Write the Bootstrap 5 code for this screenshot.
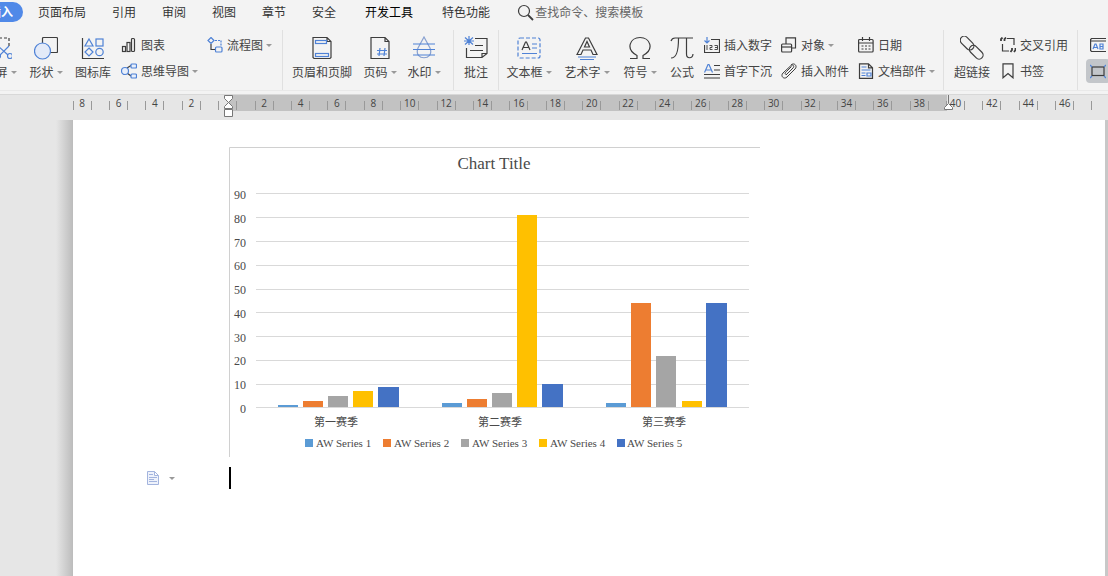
<!DOCTYPE html>
<html lang="zh-CN">
<head>
<meta charset="utf-8">
<meta name="viewport" content="width=device-width, initial-scale=1">
<title>文档编辑器</title>
<link rel="stylesheet" href="https://cdn.jsdelivr.net/npm/bootstrap@5.3.0/dist/css/bootstrap.min.css">
<style>
  body { font: 12px/16px "Noto Sans CJK SC", sans-serif; color: #444; background: #e6e6e6; overflow: hidden; }
  .ribbon { background: #f3f3f3; border-bottom: 1px solid #d8d8d8; }
  .tabs { height: 24px; gap: 26px; white-space: nowrap; }
  .tabs a { color: #333; text-decoration: none; }
  .tabs .tab-current { margin-left: -25px; padding: 2px 10px 2px 14px; width: 48px; margin-right: -11px; border-radius: 10px; background: #5089e8; color: #fff; font-weight: 700; }
  .tab-gap { margin-left: 3px; }
  .finder { width: 160px; gap: 1px; margin-left: 1px; }
  .finder input { border: 0; padding: 0; background: none; outline: 0; min-width: 0; height: 18px; line-height: 18px; }
  .finder input::placeholder { color: #666; opacity: 1; }
  .tools { height: 66px; }
  .tools > div { flex: none; margin-top: 6px; padding-top: 4px; }
  .tools svg, .finder svg { flex: none; fill: none; stroke: #3d3d3d; stroke-width: 1.2; }
  .tools svg .blu { stroke: #4f82d6; }
  .group + .group { border-left: 1px solid #e0e0e0; }
  .group-foot { height: 4px; border-top: 1px solid #e9e9e9; }
  .tools .btn { font-size: 12px; line-height: 16px; color: #444; padding: 0; border: 0; border-radius: 0; white-space: nowrap; }
  .big { height: 48px; display: flex; flex-direction: column; align-items: center; gap: 4px; }
  .big svg { width: 24px; height: 24px; margin-top: 2px; }
  .stack { display: flex; flex-direction: column; align-items: flex-start; gap: 10px; padding: 3px 0 0 5px; }
  .stack .btn { display: flex; align-items: center; gap: 4px; }
  .stack svg { width: 16px; height: 16px; }
  .dd::after { content: ""; display: inline-block; vertical-align: 3px; margin-left: 3px; border: 3px solid transparent; border-top-color: #999; border-bottom: 0; }
  .w34 { width: 34px; } .w38 { width: 38px; } .w44 { width: 44px; } .w46 { width: 46px; }
  .w48 { width: 48px; } .w50 { width: 50px; } .w56 { width: 56px; } .w60 { width: 60px; }
  .w77 { width: 77px; } .w78 { width: 78px; } .w80 { width: 80px; } .w86 { width: 86px; } .w90 { width: 90px; }
  .scrolled { margin-left: -22px; }
  .tools .picked { background: #c3c6ca; border-radius: 4px; padding: 4px; margin: -4px; }
  .ruler { height: 25px; padding-left: 64px; font: 10px/16px "Open Sans", sans-serif; color: #444; background: #e6e6e6; }
  .ruler > div { background: #e6e6e6; height: 16px; flex: 1 1 0; min-width: 0; display: flex; justify-content: center; align-items: flex-start; position: relative; }
  .ruler > div::before, .ruler > div::after { content: ""; width: 1px; height: 9px; margin-top: 6px; background: #999; flex: none; }
  .ruler span { width: 17px; text-align: center; }
  .ruler .in { background: #c2c2c2; }
  .ruler .from { background: linear-gradient(90deg, #e6e6e6 50%, #c2c2c2 50%); }
  .ruler .to { background: linear-gradient(90deg, #c2c2c2 28%, #e6e6e6 28%); }
  .ruler .tail { flex: 0 0 25px; justify-content: flex-start; padding-left: 8px; }
  .ruler .tail::after { display: none; }
  .ruler svg { position: absolute; top: 0; left: 50%; margin-left: -4px; fill: #fff; stroke: #777; }
  .ruler .to svg { left: 28%; }
  .desk { padding: 0 3px 0 56px; background: linear-gradient(90deg, #e6e6e6 56px, #bcbcbc 73px, #c8c8c8 73px); }
  .sheet { margin-left: 17px; background: #fff; min-height: calc(100vh - 120px); padding: 27px 0 0 73px; }
  .chart { display: block; margin-left: 83px; font-family: "Liberation Serif", "Noto Sans CJK SC", serif; fill: #4a4a4a; }
  .after-chart { margin-top: 10px; }
  .paste { width: 83px; gap: 6px; }
  .paste svg { fill: #eef2fb; stroke: #a3b4de; }
  .ins { width: 2px; height: 22px; background: #000; }
</style>
</head>
<body>
<header class="ribbon">
  <nav class="tabs d-flex align-items-center" aria-label="功能区">
    <a href="#" class="tab-current">插入</a>
    <a href="#">页面布局</a><a href="#">引用</a><a href="#">审阅</a><a href="#">视图</a><a href="#">章节</a><a href="#">安全</a>
    <a href="#" class="tab-gap text-black">开发工具</a><a href="#" class="tab-gap">特色功能</a>
    <div class="finder d-flex align-items-center">
      <svg width="17" height="17" viewBox="0 0 17 17"><circle cx="7" cy="7" r="5.5"/><path d="M11 11l5 5" stroke-width="1.8"/></svg>
      <input type="text" aria-label="查找命令" placeholder="查找命令、搜索模板">
    </div>
  </nav>
  <div class="tools d-flex">
    <div class="group d-flex">
      <button class="btn big w44 scrolled"><svg viewBox="0 0 24 24"><path d="M1 12V2h20v8" stroke-dasharray="3 2"/><g class="blu"><path d="M10 10l10 9M21 10l-9 9"/><circle cx="10" cy="20" r="2.5"/><circle cx="22" cy="20" r="2.5"/></g></svg><span class="dd">截屏</span></button>
      <button class="btn big w48"><svg viewBox="0 0 24 24"><rect x="8.5" y="1.5" width="15" height="15" rx="1"/><circle class="blu" cx="8.5" cy="15" r="8" fill="#e3eaf8"/></svg><span class="dd">形状</span></button>
      <button class="btn big w46"><svg viewBox="0 0 24 24"><path d="M1.5 2v20.5H23"/><g class="blu"><path d="M8 3l4 7H4zM8 12l4 4-4 4-4-4z"/><rect x="15" y="3" width="7" height="7"/><circle cx="18.5" cy="16" r="3.7"/></g></svg><span>图标库</span></button>
      <div class="stack w86">
        <button class="btn"><svg viewBox="0 0 16 16"><rect x="1.500" y="9.500" width="3" height="5"/><rect x="6" y="5.500" width="3" height="9"/><rect x="10.500" y="1.500" width="3" height="13" rx="1"/></svg><span>图表</span></button>
        <button class="btn"><svg viewBox="0 0 16 16"><path d="M6 5l4-2.500M6 10l4 3"/><g class="blu" fill="#e8effb"><circle cx="4" cy="8" r="3.500"/><rect x="10" y="1" width="5.500" height="4" rx="1"/><rect x="10" y="11" width="5.500" height="4" rx="1"/></g></svg><span class="dd">思维导图</span></button>
      </div>
      <div class="stack w80">
        <button class="btn"><svg viewBox="0 0 16 16"><path class="blu" d="M4 .5l3 3-3 3-3-3z"/><path class="blu" d="M8 3.500h6v6" stroke-dasharray="2 1"/><path d="M4 7v5.500h4"/><rect class="blu" x="8.500" y="10" width="6.500" height="5" rx="1"/></svg><span class="dd">流程图</span></button>
      </div>
    </div>
    <div class="group d-flex pe-1">
      <button class="btn big w78"><svg viewBox="0 0 24 24"><path d="M3 1.500h14l4 4v16l-1 1H4l-1-1zM17 1.500v4h4"/><g class="blu"><rect x="5.500" y="4.500" width="11" height="3"/><rect x="5.500" y="17.500" width="13" height="3"/></g></svg><span>页眉和页脚</span></button>
      <button class="btn big w38"><svg viewBox="0 0 24 24"><path d="M3 1.500h14l4 4v17H3zM17 1.500v4h4"/><path class="blu" d="M12 12l-1 8M17 12l-1 8M9 14.500h10M9 18h10"/></svg><span class="dd">页码</span></button>
      <button class="btn big w50"><svg viewBox="0 0 24 24"><path d="M12 1L6 12c-5 13 17 13 12 0z" stroke="#87a0d0"/><path class="blu" d="M1 8h22M1 13.500h22M1 19h22"/></svg><span class="dd">水印</span></button>
    </div>
    <div class="group d-flex">
      <button class="btn big w44"><svg viewBox="0 0 24 24"><path d="M11 2.500h12v15l-5 4H2.500V12M23 17.500h-5v4M11 9.500h8M6 14.500h13"/><path class="blu" d="M5 0v9M1 1.500l8 7M9 1.500l-8 7M0 5h10"/></svg><span>批注</span></button>
    </div>
    <div class="group d-flex">
      <button class="btn big w60"><svg viewBox="0 0 24 24"><rect class="blu" x="1" y="2" width="22" height="20" rx="2" stroke-dasharray="4 2"/><path d="M5 14L8.500 6h1L13 14M6 11.500h6"/><path class="blu" d="M15 8h5M15 12h5M5 17.500h15"/></svg><span class="dd">文本框</span></button>
      <button class="btn big w56"><svg viewBox="0 0 24 24"><path d="M2 18.500L10.500 2h3L22 18.500h-4L16 14H8l-2 4.500zM9.500 11h5L12 5.500z"/><path class="blu" d="M3 21h18M5 23.500h14"/></svg><span class="dd">艺术字</span></button>
      <button class="btn big w50"><svg viewBox="0 0 24 24"><path d="M2 22.500h7v-3C-3 13 2 1.500 12 1.500S27 13 15 19.500v3h7"/></svg><span class="dd">符号</span></button>
      <button class="btn big w34"><svg viewBox="0 0 24 24"><path d="M1 5q1-3 4-3h18M8.500 2.500C8.500 14 7 22 1 22M16.500 2.500V18c0 5 6 5 6.500 0"/></svg><span>公式</span></button>
      <div class="stack w77">
        <button class="btn"><svg viewBox="0 0 16 16"><path d="M7 2.500h8.500v13H.5V8"/><path class="blu" d="M3 0v6M.5 3.500L3 6l2.500-2.500"/><path d="M3 8v5M5.500 8.500H8v2H6v2h2.500M10.500 8.500h3v4h-3M11 10.500h2.500" stroke-width=".9"/></svg><span>插入数字</span></button>
        <button class="btn"><svg viewBox="0 0 16 16"><path class="blu" d="M.5 9.500L4 1.500h1l3.500 8M2 7h5.500"/><path d="M10 2.500h6M10 7h6M0 11.500h16M0 15h16"/></svg><span>首字下沉</span></button>
      </div>
      <div class="stack w77">
        <button class="btn"><svg viewBox="0 0 16 16"><path d="M5 7V.8h9.500V11H11"/><rect x=".6" y="7" width="10" height="8" rx="1"/><path d="M.6 10h10"/></svg><span class="dd">对象</span></button>
        <button class="btn"><svg viewBox="0 0 16 16"><path d="M5 12l7-7c2-2-.5-4-2-2.500L2 10c-3 3 1 7 4 4l8-8c3-3-1-7-4-4M4.500 11.500c-1-1 0-2 1-3l5-5" stroke-width="1"/></svg><span>插入附件</span></button>
      </div>
      <div class="stack w90">
        <button class="btn"><svg viewBox="0 0 16 16"><rect x=".6" y="2.500" width="14.500" height="12.500" rx="1"/><path d="M4.500 0v4M11.500 0v4M1 6h14M3.500 9h2M7 9h2M10.500 9h2M3.500 12h2M7 12h2M10.500 12h2"/></svg><span>日期</span></button>
        <button class="btn"><svg viewBox="0 0 16 16"><path d="M1.500.8h9l4 4v10.500h-13zM10.500.8v4h4"/><path class="blu" d="M3.500 4h5M3.500 7h9M3.500 10h4M3.500 12.500h4M9 10h4v3H9z"/></svg><span class="dd">文档部件</span></button>
      </div>
    </div>
    <div class="group d-flex">
      <button class="btn big w56"><svg viewBox="0 0 24 24"><g transform="rotate(45 12 12)"><rect x="-3" y="8" width="16" height="8" rx="4"/><rect x="10" y="8" width="16" height="8" rx="4"/></g></svg><span>超链接</span></button>
      <div class="stack w77 ps-0">
        <button class="btn"><svg viewBox="0 0 16 16"><path d="M7 1.500h7V8M2.500 7v7H9"/><path d="M2.500.5L1 2v2M6 .5L4.500 2v2M12 11v2l-1.500 2M15.500 11v2L14 15" stroke-width="1.800"/></svg><span>交叉引用</span></button>
        <button class="btn"><svg viewBox="0 0 16 16"><path d="M3 .8h10v14L8 10.500l-5 4.300z"/></svg><span>书签</span></button>
      </div>
    </div>
    <div class="group d-flex">
      <div class="stack ps-2 ms-1">
        <button class="btn" aria-label="文字域"><svg viewBox="0 0 16 16"><path d="M16 1.500H1.500L.6 2.500v11l.9 1H16M1 4h15"/><path class="blu" d="M3 12l2-5h1l2 5M4 10.500h3M10 7v5h3v-5zM10 9.500h3"/></svg></button>
        <button class="btn picked" aria-label="域底纹"><svg viewBox="0 0 16 16"><rect x="2" y="4" width="12" height="8.500"/><path class="blu" d="M0 2l2 2M0 15l2-2M16 2l-2 2M16 15l-2-2"/></svg></button>
      </div>
    </div>
  </div>
  <div class="group-foot"></div>
</header>

<div class="ruler d-flex">
  <div><span>8</span></div><div><span>6</span></div><div><span>4</span></div><div><span>2</span></div>
  <div class="from"><span></span><svg width="10" height="23" viewBox="0 0 10 23"><path d="M.5.5h8v3l-4 4-4-4zM4.500 7.500l4 4v2h-8v-2zM.5 14.500h8v7h-8z"/></svg></div>
  <div class="in"><span>2</span></div><div class="in"><span>4</span></div><div class="in"><span>6</span></div><div class="in"><span>8</span></div><div class="in"><span>10</span></div><div class="in"><span>12</span></div><div class="in"><span>14</span></div><div class="in"><span>16</span></div><div class="in"><span>18</span></div><div class="in"><span>20</span></div><div class="in"><span>22</span></div><div class="in"><span>24</span></div><div class="in"><span>26</span></div><div class="in"><span>28</span></div><div class="in"><span>30</span></div><div class="in"><span>32</span></div><div class="in"><span>34</span></div><div class="in"><span>36</span></div><div class="in"><span>38</span></div>
  <div class="to"><span>40</span><svg width="10" height="16" viewBox="0 0 10 16"><path d="M4.500 0v8M4.500 8.500l4 4v2h-8v-2z"/></svg></div>
  <div><span>42</span></div><div><span>44</span></div><div><span>46</span></div><div class="tail"></div>
</div>

<main class="desk">
  <div class="sheet">
    <svg class="chart" width="531" height="310" viewBox="0 0 531 310" role="img" aria-label="Chart Title">
      <path d="M.5 310V.5H531" fill="none" stroke="#d0d0d0"/>
      <path d="M27 46.500h493M27 70.500h493M27 94.500h493M27 118.500h493M27 142.500h493M27 165.500h493M27 189.500h493M27 213.500h493M27 237.500h493M27 260.500h493" stroke="#d9d9d9"/>
      <text x="265" y="22" font-size="17" text-anchor="middle">Chart Title</text>
      <g font-size="12" text-anchor="end">
        <text x="17" y="52">90</text><text x="17" y="76">80</text><text x="17" y="100">70</text><text x="17" y="123">60</text><text x="17" y="147">50</text><text x="17" y="171">40</text><text x="17" y="195">30</text><text x="17" y="218">20</text><text x="17" y="242">10</text><text x="17" y="266">0</text>
      </g>
      <g fill="#5b9bd5"><path d="M49 258h20v2H49zM213 256h20v4h-20zM377 256h20v4h-20z"/></g>
      <g fill="#ed7d31"><path d="M74 254h20v6H74zM238 252h20v8h-20zM402 156h20v104h-20z"/></g>
      <g fill="#a5a5a5"><path d="M99 249h20v11H99zM263 246h20v14h-20zM427 209h20v51h-20z"/></g>
      <g fill="#ffc000"><path d="M124 244h20v16h-20zM288 68h20v192h-20zM453 254h20v6h-20z"/></g>
      <g fill="#4472c4"><path d="M149 240h21v20h-21zM313 237h21v23h-21zM477 156h21v104h-21z"/></g>
      <g font-size="11" text-anchor="middle"><text x="107" y="279">第一赛季</text><text x="271" y="279">第二赛季</text><text x="435" y="279">第三赛季</text></g>
      <path fill="#5b9bd5" d="M76 292h8v8h-8z"/><path fill="#ed7d31" d="M154 292h8v8h-8z"/><path fill="#a5a5a5" d="M232 292h8v8h-8z"/><path fill="#ffc000" d="M310 292h8v8h-8z"/><path fill="#4472c4" d="M388 292h8v8h-8z"/>
      <g font-size="11"><text x="87" y="300">AW Series 1</text><text x="165" y="300">AW Series 2</text><text x="243" y="300">AW Series 3</text><text x="321" y="300">AW Series 4</text><text x="398" y="300">AW Series 5</text></g>
    </svg>
    <div class="after-chart d-flex align-items-center">
      <button class="paste btn p-0 border-0 d-flex align-items-center dd" aria-label="粘贴选项"><svg width="14" height="16" viewBox="0 0 14 16"><path d="M1.500 1.500h7l4 4v9h-11zM8.500 1.500v4h4M3 4.500h4M3 7.500h8M3 9.500h5M3 11.500h8"/></svg></button>
      <div class="ins"></div>
    </div>
  </div>
</main>
<script src="https://cdn.jsdelivr.net/npm/bootstrap@5.3.0/dist/js/bootstrap.bundle.min.js"></script>
</body>
</html>
